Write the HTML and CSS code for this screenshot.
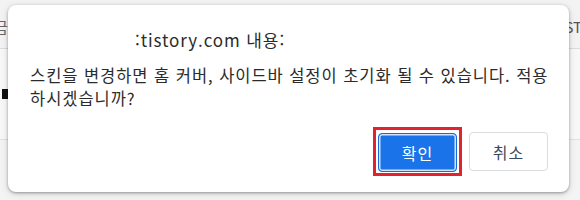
FILE: index.html
```
<!DOCTYPE html>
<html lang="ko">
<head>
    <meta charset="UTF-8">
    <meta name="viewport" content="width=device-width, initial-scale=1.0">
    <title>tistory.com 내용</title>
    <link rel="stylesheet" href="styles.css">
</head>
<body>
    <div class="page">
        <div class="page-top">
            <span class="left-word">금</span>
            <span class="right-word">ST</span>
        </div>
        <div class="page-mid">
            <span class="marker"></span>
        </div>
        <div class="page-bottom"></div>
    </div>

    <div class="dialog" role="alertdialog">
        <div class="dialog-title"><span class="masked"></span>:tistory.com 내용:</div>
        <div class="dialog-message">스킨을 변경하면 홈 커버, 사이드바 설정이 초기화 될 수 있습니다. 적용 하시겠습니까?</div>
        <div class="dialog-buttons">
            <span class="focus-box">
                <button class="btn btn-ok">확인</button>
            </span>
            <button class="btn btn-cancel">취소</button>
        </div>
    </div>
</body>
</html>
```

FILE: styles.css
```
body {
    margin: 0;
    width: 580px;
    height: 200px;
    overflow: hidden;
    background-color: #f4f4f4;
    font-family: "Noto Sans CJK KR", "Noto Sans", sans-serif;
    color: #202124;
}
.page {
    display: flex;
    flex-direction: column;
    height: 200px;
}
.page-top {
    height: 48px;
    border-bottom: 1px solid #dcdcdc;
    display: flex;
    justify-content: space-between;
    align-items: flex-start;
    background-color: #f3f3f3;
}
.left-word {
    margin-left: -6px;
    margin-top: 16px;
    font-size: 15px;
    color: #666;
}
.right-word {
    margin-right: -2px;
    margin-top: 16px;
    font-size: 15px;
    color: #555;
}
.page-mid {
    height: 90px;
    border-bottom: 1px solid #e2e2e2;
    background-color: #f8f8f8;
}
.marker {
    display: block;
    width: 6px;
    height: 10px;
    margin: 40px 0 0 2px;
    background-color: #111;
}
.page-bottom {
    flex: 1;
    background-color: #f4f4f4;
}
.dialog {
    position: absolute;
    left: 8px;
    top: 5px;
    width: 561px;
    height: 187px;
    box-sizing: border-box;
    padding: 23px 21px 16px 22px;
    background-color: #fff;
    border-radius: 8px;
    box-shadow: 0 1px 3px rgba(0, 0, 0, 0.35), 0 2px 8px rgba(0, 0, 0, 0.12);
    display: flex;
    flex-direction: column;
}
.dialog-title {
    font-size: 17px;
    line-height: 24px;
    letter-spacing: 0.9px;
    color: #2b2b2b;
}
.masked {
    display: inline-block;
    width: 105px;
}
.dialog-message {
    margin-top: 12px;
    margin-right: -4px;
    font-size: 16.5px;
    line-height: 23px;
    letter-spacing: 0.95px;
    word-break: keep-all;
    color: #2b2b2b;
}
.dialog-buttons {
    margin-top: auto;
    display: flex;
    justify-content: flex-end;
    align-items: center;
    gap: 7px;
}
.focus-box {
    display: flex;
    padding: 3px 2px 1px 2px;
    border: 3px solid #e0232e;
}
.btn {
    width: 79px;
    height: 39px;
    box-sizing: border-box;
    border-radius: 4px;
    font-family: inherit;
    font-size: 16px;
    letter-spacing: 1px;
    cursor: pointer;
}
.btn-ok {
    background-color: #1a73e8;
    color: #fff;
    border: 1px solid #1a6ad6;
    box-shadow: inset 0 0 0 1.5px #d2e3fc;
}
.btn-cancel {
    background-color: #fff;
    color: #3a4a5e;
    border: 1px solid #dadce0;
}
```
